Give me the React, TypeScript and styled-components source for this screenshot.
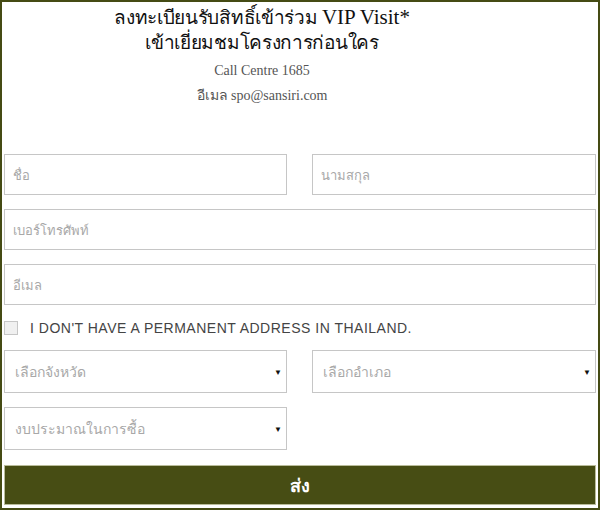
import React from 'react';
import styled, { createGlobalStyle } from 'styled-components';

const GlobalStyle = createGlobalStyle`
  html, body {
    margin: 0;
    padding: 0;
    background: #fff;
  }
  * {
    box-sizing: border-box;
  }
`;

const Frame = styled.div`
  width: 600px;
  height: 510px;
  border: 2px solid #454b14;
  padding: 3px 2px 0 2px;
  display: flex;
  flex-direction: column;
`;

// the heading block sits left of centre in the original
const Header = styled.div`
  margin-right: 76px;
  text-align: center;
  font-family: 'Liberation Serif', 'Times New Roman', serif;
`;

const Title = styled.h1`
  margin: 0;
  font-size: 19px;
  font-weight: normal;
  line-height: 25px;
  letter-spacing: -0.3px;
  color: #111;
`;

const Latin = styled.span`
  font-size: 21px;
  letter-spacing: 0;
`;

const Info = styled.p`
  margin: 0;
  font-size: 14px;
  line-height: 25px;
  color: #555;
  &:first-of-type {
    margin-top: 3px;
  }
`;

const Form = styled.form`
  margin-top: 46px;
  display: flex;
  flex-direction: column;
  gap: 14px;
`;

const Row = styled.div<{ $half?: boolean }>`
  display: grid;
  grid-template-columns: ${(p) => (p.$half ? '283px' : '283px 284px')};
  column-gap: 25px;
`;

const Field = styled.input`
  width: 100%;
  height: 41px;
  border: 1px solid #c6c6c6;
  padding: 0 8px;
  font-family: Tahoma, 'Noto Sans', 'DejaVu Sans', sans-serif;
  font-size: 13px;
  color: #333;
  outline: none;
  &::placeholder {
    color: #a8a8a8;
  }
`;

const SelectWrap = styled.div`
  position: relative;
  height: 43px;
`;

const Select = styled.select`
  appearance: none;
  width: 100%;
  height: 100%;
  border: 1px solid #c6c6c6;
  background: #fff;
  padding: 0 28px 0 10px;
  font-family: Tahoma, 'Noto Sans', 'DejaVu Sans', sans-serif;
  font-size: 14px;
  color: #a8a8a8;
  outline: none;
`;

const Arrow = styled.span`
  position: absolute;
  right: 5px;
  top: 50%;
  transform: translateY(-50%);
  font-size: 8px;
  color: #111;
  pointer-events: none;
`;

const CheckRow = styled.label`
  display: flex;
  align-items: center;
  gap: 12px;
  height: 17px;
  font-family: 'Liberation Sans', Arial, sans-serif;
  font-size: 14px;
  letter-spacing: 0.5px;
  color: #444;
`;

const Box = styled.span`
  width: 14px;
  height: 14px;
  border: 1px solid #c6c6c6;
  background: #f0f0f0;
`;

const Submit = styled.button`
  margin-top: 1px;
  height: 40px;
  width: 100%;
  border: 1px solid #b9bc9a;
  background: #474d14;
  color: #fff;
  font-family: Tahoma, 'Noto Sans', 'DejaVu Sans', sans-serif;
  font-weight: bold;
  font-size: 18px;
`;

const Dropdown = ({ label }: { label: string }) => (
  <SelectWrap>
    <Select defaultValue="">
      <option value="">{label}</option>
    </Select>
    <Arrow>▼</Arrow>
  </SelectWrap>
);

const App = () => {
  return (
    <Frame>
      <GlobalStyle />
      <Header>
        <Title>
          ลงทะเบียนรับสิทธิ์เข้าร่วม <Latin>VIP Visit*</Latin>
          <br />
          เข้าเยี่ยมชมโครงการก่อนใคร
        </Title>
        <Info>Call Centre 1685</Info>
        <Info>อีเมล spo@sansiri.com</Info>
      </Header>
      <Form onSubmit={(e) => e.preventDefault()}>
        <Row>
          <Field placeholder="ชื่อ" />
          <Field placeholder="นามสกุล" />
        </Row>
        <Field placeholder="เบอร์โทรศัพท์" />
        <Field placeholder="อีเมล" />
        <CheckRow>
          <Box />
          I DON'T HAVE A PERMANENT ADDRESS IN THAILAND.
        </CheckRow>
        <Row>
          <Dropdown label="เลือกจังหวัด" />
          <Dropdown label="เลือกอำเภอ" />
        </Row>
        <Row $half>
          <Dropdown label="งบประมาณในการซื้อ" />
        </Row>
        <Submit type="submit">ส่ง</Submit>
      </Form>
    </Frame>
  );
};

export default App;
